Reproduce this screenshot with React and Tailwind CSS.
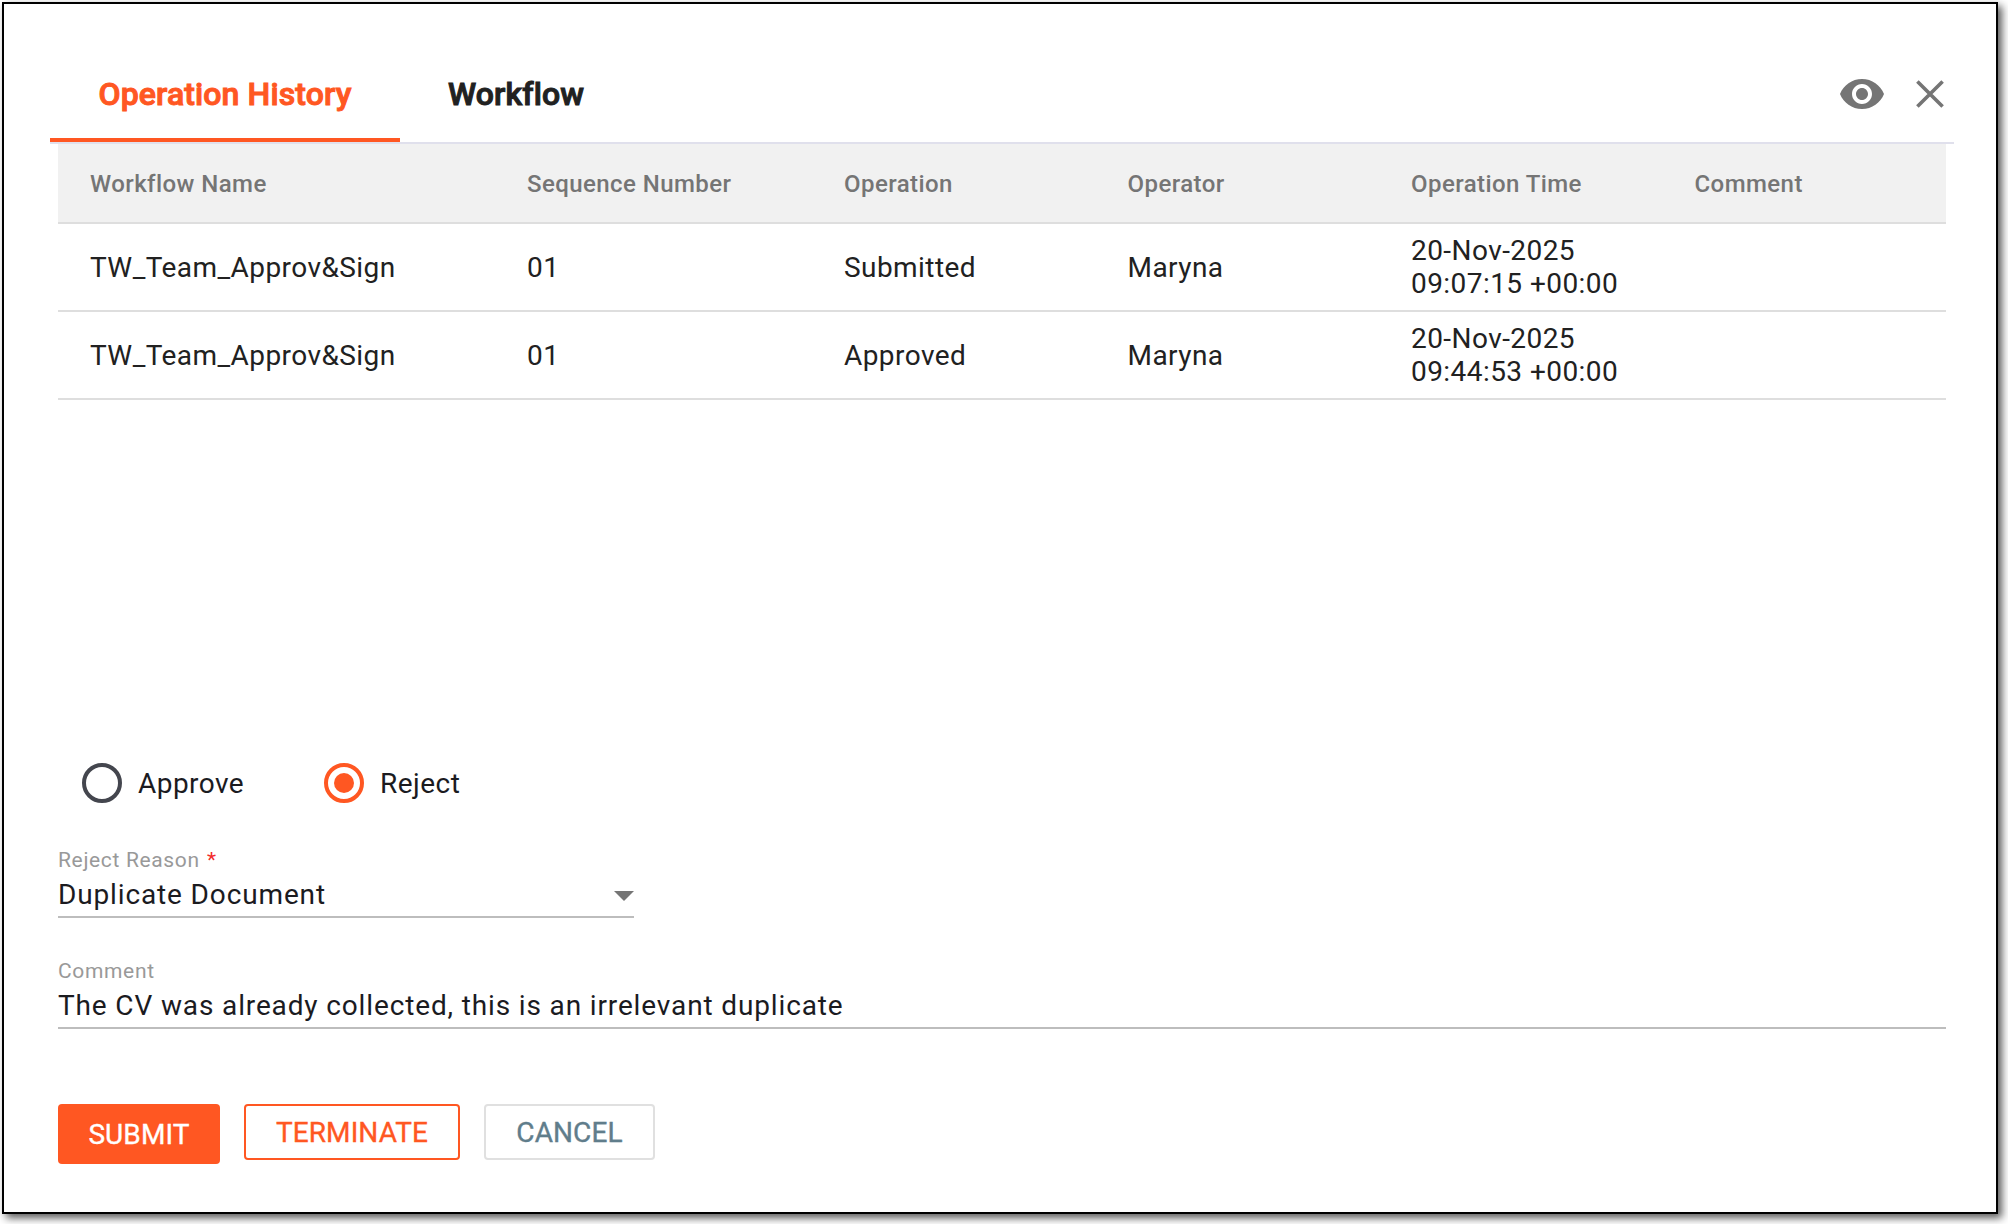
import React from "react";

const COLUMNS = ["Workflow Name", "Sequence Number", "Operation", "Operator", "Operation Time", "Comment"];

const ROWS = [
  ["TW_Team_Approv&Sign", "01", "Submitted", "Maryna", "20-Nov-2025 09:07:15 +00:00", ""],
  ["TW_Team_Approv&Sign", "01", "Approved", "Maryna", "20-Nov-2025 09:44:53 +00:00", ""],
];

const GRID = "grid grid-cols-[437px_317px_283.5px_283.5px_283.5px_283.5px]";

function EyeIcon() {
  return (
    <svg viewBox="0 0 24 24" className="size-12" fill="#757575">
      <path d="M12 4.5C7 4.5 2.73 7.61 1 12c1.73 4.39 6 7.5 11 7.5s9.27-3.11 11-7.5c-1.73-4.39-6-7.5-11-7.5zM12 17c-2.76 0-5-2.24-5-5s2.24-5 5-5 5 2.24 5 5-2.24 5-5 5zm0-8c-1.66 0-3 1.34-3 3s1.34 3 3 3 3-1.34 3-3-1.34-3-3-3z" />
    </svg>
  );
}

function CloseIcon() {
  return (
    <svg viewBox="0 0 28 28" className="size-7" stroke="#757575" strokeWidth="3.6" fill="none">
      <path d="M1.4 1.4 26.6 26.6M26.6 1.4 1.4 26.6" />
    </svg>
  );
}

function Radio({ label, checked }) {
  return (
    <label className="flex items-center gap-4 text-[28px] leading-10 tracking-[0.45px] text-[#1b1b1f]">
      <span
        className={
          checked
            ? "flex size-10 items-center justify-center rounded-full border-4 border-[#ff5722]"
            : "flex size-10 items-center justify-center rounded-full border-4 border-[#44464e]"
        }
      >
        {checked && <span className="size-5 rounded-full bg-[#ff5722]" />}
      </span>
      <span className="h-[38px]">{label}</span>
    </label>
  );
}

function Field({ label, required, value, className, children }) {
  return (
    <div className={className}>
      <div className="h-[26px] text-[21px] leading-7 tracking-[0.656px] text-[#999999]">
        {label}
        {required && <span className="ml-[1.5px] text-[#f22c2c]"> *</span>}
      </div>
      <div className="flex h-[46px] items-center justify-between border-b-2 border-[#bdbdbd] pt-0.5 text-[28px] tracking-[0.86px] text-[#1b1b1f]">
        <span>{value}</span>
        {children}
      </div>
    </div>
  );
}

export default function App() {
  return (
    <div className="h-[1224px] w-[2008px] bg-white p-0.5 font-[Roboto,sans-serif] text-[#212121]">
      <div className="flex h-[1212px] w-[1996px] flex-col border-2 border-black bg-white shadow-[4px_4px_8px_rgba(0,0,0,0.65)]">
        <header className="mx-[46px] mt-[42px] flex h-[98px] w-[1904px] shrink-0 items-stretch border-b-2 border-[#e0e0ec]">
          <div className="flex w-[350px] justify-center border-b-4 border-[#ff5722] pt-7 text-[32px] leading-10 font-medium tracking-[0.12px] text-[#ff5722] [-webkit-text-stroke:1px]">
            Operation History
          </div>
          <div className="flex w-[232px] justify-center pt-7 text-[32px] leading-10 font-medium tracking-[0.12px] [-webkit-text-stroke:1px]">
            Workflow
          </div>
          <div className="ml-auto flex items-center gap-[30px] pr-2.5">
            <EyeIcon />
            <CloseIcon />
          </div>
        </header>

        <section className="mx-[54px] w-[1888px] shrink-0">
          <div className={`${GRID} h-20 items-center border-b-2 border-[#dedede] bg-[#f1f1f1] pt-0.5 text-2xl font-medium tracking-[0.43px] text-[#757575]`}>
            {COLUMNS.map((name) => (
              <div key={name} className="pl-8">{name}</div>
            ))}
          </div>
          {ROWS.map((row, i) => (
            <div key={i} className={`${GRID} h-[88px] items-center border-b-2 border-[#dedede] text-[28px] leading-[33px] tracking-[0.44px]`}>
              {row.map((cell, j) => (
                <div key={j} className="px-8">{cell}</div>
              ))}
            </div>
          ))}
        </section>

        <div className="mt-[363px] ml-[78px] flex shrink-0 gap-20">
          <Radio label="Approve" />
          <Radio label="Reject" checked />
        </div>

        <Field className="mt-[43px] ml-[54px] w-[576px]" label="Reject Reason" required value="Duplicate Document">
          <svg viewBox="0 0 20 10" className="mt-0.5 h-2.5 w-5" fill="#757575">
            <path d="M0 0h20L10 10z" />
          </svg>
        </Field>
        <Field
          className="mt-[39px] ml-[54px] w-[1888px]"
          label="Comment"
          value="The CV was already collected, this is an irrelevant duplicate"
        />

        <div className="mt-[75px] ml-[54px] flex items-start gap-6 text-[28px] tracking-[0.1px] [-webkit-text-stroke:0.35px]">
          <button className="h-[60px] w-[162px] rounded-[4px] bg-[#ff5722] pt-0.5 text-white">SUBMIT</button>
          <button className="h-14 w-[216px] rounded-[4px] border-2 border-[#ff5722] pt-0.5 text-[#ff5722]">TERMINATE</button>
          <button className="h-14 w-[171px] rounded-[4px] border-2 border-[#e0e0e0] pt-0.5 text-[#607d8b]">CANCEL</button>
        </div>
      </div>
    </div>
  );
}
